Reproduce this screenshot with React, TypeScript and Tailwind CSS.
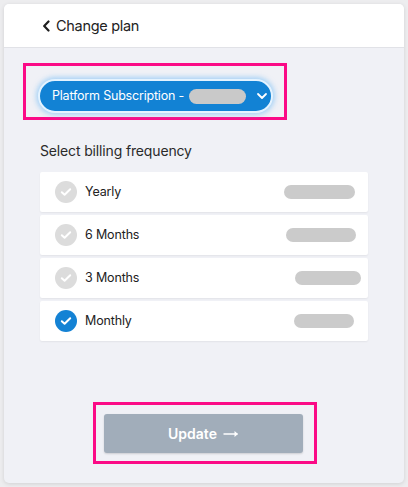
import React from "react";

const rows = [
  { label: "Yearly", w: 71, mr: 13, checked: false },
  { label: "6 Months", w: 70, mr: 12, checked: false },
  { label: "3 Months", w: 66, mr: 7, checked: false },
  { label: "Monthly", w: 60, mr: 14, checked: true },
];

function Check({ checked }: { checked: boolean }) {
  return (
    <div
      className={
        "w-[22px] h-[22px] rounded-full flex items-center justify-center shrink-0 " +
        (checked ? "bg-[#1482d4]" : "bg-[#dcdcdc]")
      }
    >
      <svg width="12" height="10" viewBox="0 0 12 10" fill="none">
        <path d="M1.8 5.2 L4.6 7.8 L10.2 2.2" stroke="white" strokeWidth="2" strokeLinecap="round" strokeLinejoin="round" />
      </svg>
    </div>
  );
}

export default function App() {
  return (
    <div className="w-[408px] h-[487px] bg-[#ededef] pt-[4px] pl-[4px] font-['Inter',sans-serif] overflow-hidden">
      <div className="w-[400px] h-[479px] rounded-[5px] bg-[#f0f1f6] shadow-[0_1px_4px_rgba(0,0,0,0.12)] overflow-hidden flex flex-col">
        <div className="h-[44px] bg-white border-b border-[#e1e2e7] flex items-center pl-[38px] shrink-0">
          <svg width="9" height="12" viewBox="0 0 9 12" fill="none" className="mr-[5px]">
            <path d="M6.5 1.5 L2.2 6 L6.5 10.5" stroke="#1f1f1f" strokeWidth="2.2" strokeLinecap="round" strokeLinejoin="round" />
          </svg>
          <span className="text-[14.5px] tracking-[-0.3px] text-[#222]">Change plan</span>
        </div>
        <div className="flex flex-col pl-[19px]">
          <div className="mt-[15px] w-[264px] h-[57px] border-[3px] border-[#fb0a86] pl-[12px] pt-[13px]">
            <div className="w-[235px] h-[34px] rounded-full bg-[#1282d4] border-[2px] border-[#e4f3ff] shadow-[0_0_5px_2px_rgba(110,185,245,0.55)] flex items-center pl-[12px]">
              <span className="text-[12.5px] tracking-[-0.2px] text-white whitespace-nowrap">Platform Subscription -</span>
              <span className="ml-[5px] w-[57px] h-[15px] rounded-full bg-[#c9c9c9]"></span>
              <svg width="12" height="8" viewBox="0 0 12 8" fill="none" className="ml-[10px]">
                <path d="M2 2 L6 6 L10 2" stroke="white" strokeWidth="1.8" strokeLinecap="round" strokeLinejoin="round" />
              </svg>
            </div>
          </div>
          <div className="ml-[17px] mt-[21px] text-[14px] leading-[20px] tracking-[-0.15px] text-[#2a2a2a]">Select billing frequency</div>
          <div className="ml-[17px] mt-[11px] w-[328px] flex flex-col gap-[3px]">
            {rows.map((r) => (
              <div key={r.label} className="h-[40px] bg-white rounded-[2px] shadow-[0_1px_2px_rgba(0,0,0,0.06)] flex items-center pl-[15px]">
                <Check checked={r.checked} />
                <span className="ml-[8px] text-[12.5px] tracking-[-0.15px] text-[#222]">{r.label}</span>
                <span
                  className="ml-auto h-[14px] rounded-full bg-[#cbcbcb]"
                  style={{ width: r.w, marginRight: r.mr }}
                ></span>
              </div>
            ))}
          </div>
          <div className="ml-[70px] mt-[61px] w-[224px] h-[62px] border-[3px] border-[#fb0a86] pl-[8px] pt-[9px]">
            <div className="w-[199px] h-[39px] rounded-[3px] bg-[#a1adba] shadow-[0_1px_2px_rgba(0,0,0,0.15)] flex items-center justify-center">
              <span className="text-[14px] font-semibold text-white">Update</span>
              <svg width="16" height="8" viewBox="0 0 16 8" fill="none" className="ml-[6px] mt-[1px]">
                <path d="M0.5 4 H14.5" stroke="white" strokeWidth="1.6" />
                <path d="M11.5 1 L15 4 L11.5 7 Z" fill="white" />
              </svg>
            </div>
          </div>
        </div>
      </div>
    </div>
  );
}
